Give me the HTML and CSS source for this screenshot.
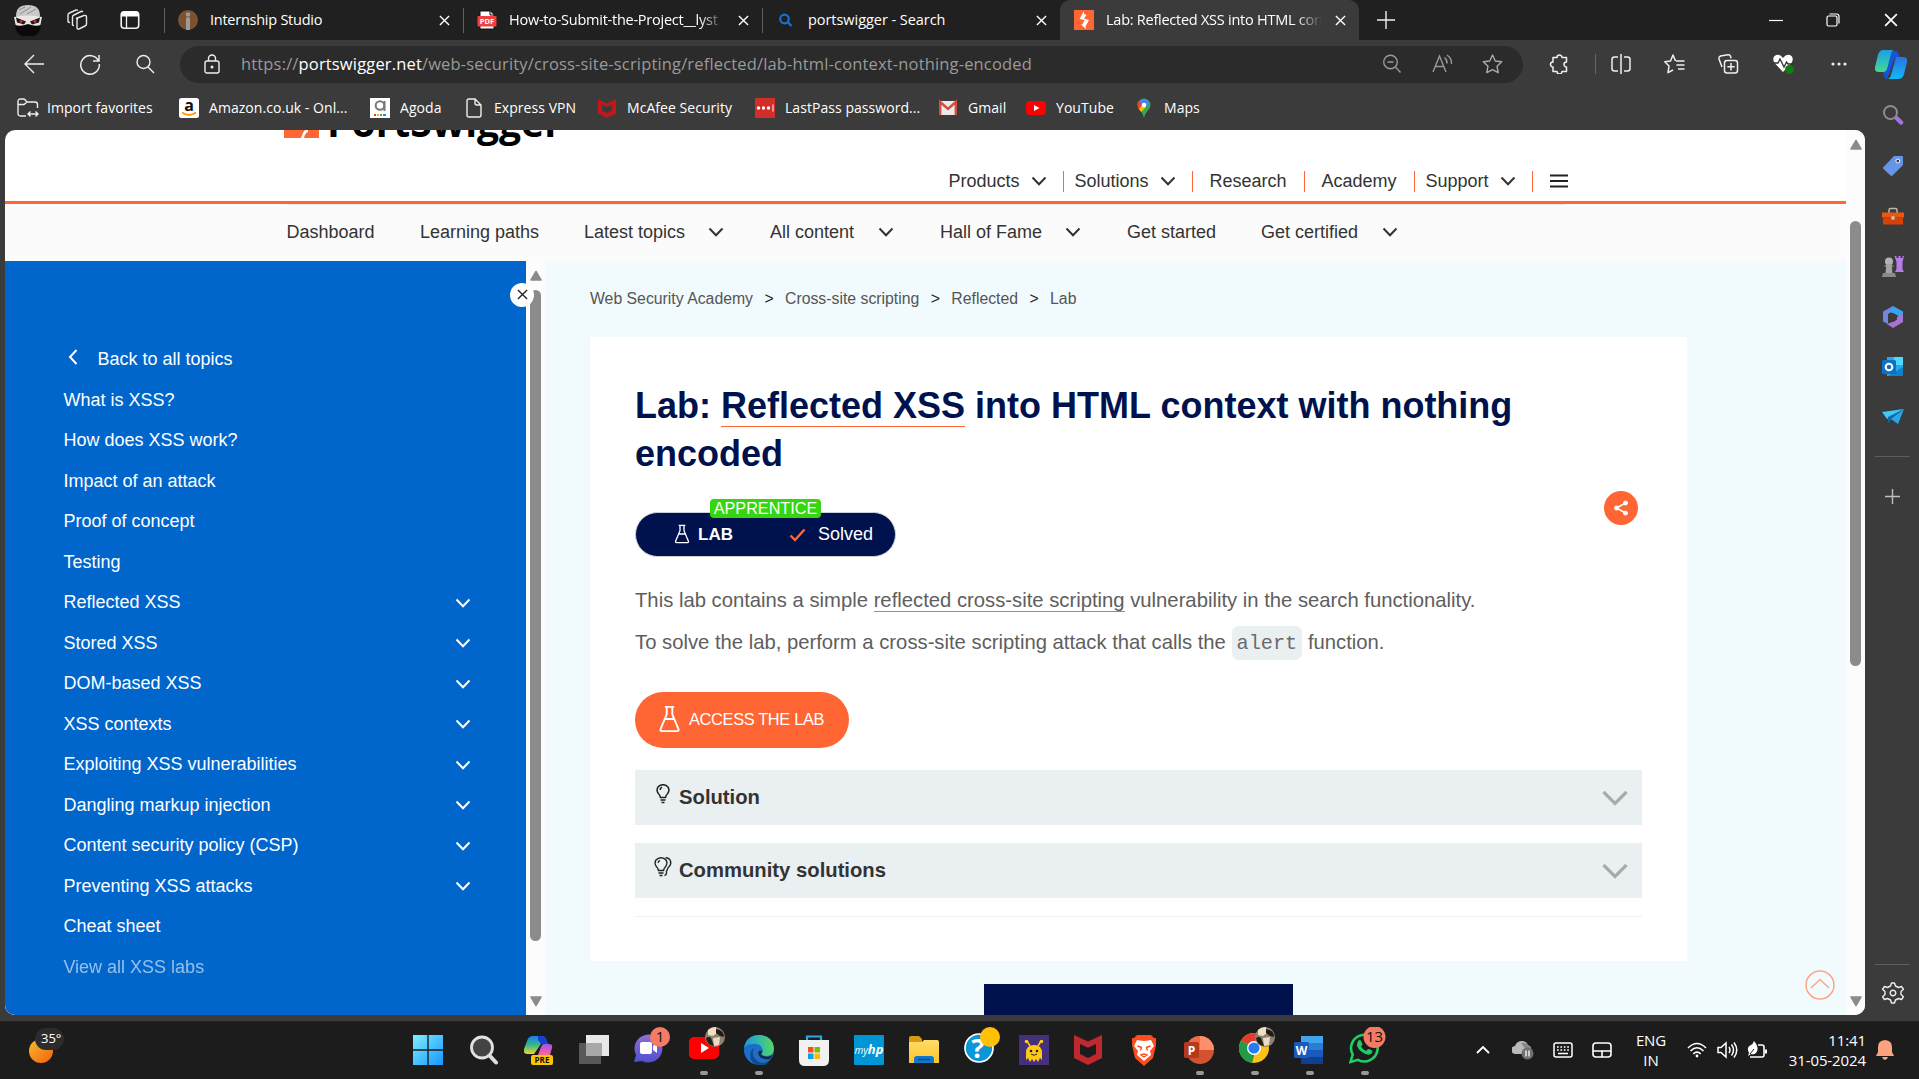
FILE: index.html
```html
<!DOCTYPE html>
<html lang="en">
<head>
<meta charset="utf-8">
<title>Lab: Reflected XSS into HTML context with nothing encoded</title>
<link rel="stylesheet" href="styles.css">
</head>
<body>
<svg class="defs" width="0" height="0">
  <defs>
    <symbol id="down" viewBox="0 0 16 10"><path d="M1.500 1.500 8 8.200 14.500 1.500" fill="none" stroke="currentColor" stroke-width="2"/></symbol>
    <symbol id="x" viewBox="0 0 12 12"><path d="M1 1l10 10M11 1 1 11" fill="none" stroke="currentColor" stroke-width="1.500"/></symbol>
    <symbol id="flask" viewBox="0 0 24 30"><path d="M7 2h10M9 2v8L2.500 25.500Q1.500 28 4 28h16q2.500 0 1.500-2.500L15 10V2M7 15h10" fill="none" stroke="currentColor" stroke-width="2"/></symbol>
    <symbol id="tri" viewBox="0 0 12 11"><path d="M6 1.500 11 10H1z" fill="#8b8b8b" stroke="#8b8b8b" stroke-linejoin="round" stroke-width="1.500"/></symbol>
    <linearGradient id="g1" x2="0" y2="1"><stop stop-color="#1aa0e8"/><stop offset="1" stop-color="#46d890"/></linearGradient>
    <linearGradient id="g2" x2="0" y2="1"><stop stop-color="#2a72e0"/><stop offset="1" stop-color="#12b8f8"/></linearGradient>
    <linearGradient id="g3" x2="1" y2="1"><stop stop-color="#7defff"/><stop offset="1" stop-color="#1596ff"/></linearGradient>
    <linearGradient id="g4" x2="1" y2="1"><stop stop-color="#f6bd2e"/><stop offset="1" stop-color="#f2600c"/></linearGradient>
    <linearGradient id="g5" x2="1" y2="0"><stop stop-color="#1599e6"/><stop offset="1" stop-color="#55d865"/></linearGradient>
    <linearGradient id="g6" x2="0" y2="1"><stop stop-color="#8d6fd1"/><stop offset="1" stop-color="#5050d0"/></linearGradient>
    <linearGradient id="g7" x2="0" y2="1"><stop stop-color="#ffdc67"/><stop offset="1" stop-color="#ffc32c"/></linearGradient>
    <linearGradient id="g8" x2="0" y2="1"><stop stop-color="#1b7fe8"/><stop offset=".5" stop-color="#35b88b"/><stop offset="1" stop-color="#f3d427"/></linearGradient>
    <linearGradient id="g9" x2="0" y2="1"><stop stop-color="#a34ef0"/><stop offset="1" stop-color="#ff6a8c"/></linearGradient>
  </defs>
</svg>

<div class="tabs">
  <div class="lead">
    <svg width="32" height="32" viewBox="0 0 32 32"><path d="M4 12Q4 1 16 1t12 11l-2 4H6z" fill="#c9c9c9"/><path d="M7 6l6-3M8 10l11-7M15 10l9-5" stroke="#8b8b8b"/><path d="M2 13q14-3 28 0l-2 10H4z" fill="#e9e6e5"/><path d="M4 13.500l10 4-2 3-7-2zM28 13.500l-10 4 2 3 7-2z" fill="#191919"/><circle cx="9" cy="17.500" r="1.500" fill="#e02020"/><circle cx="23" cy="17.500" r="1.500" fill="#e02020"/><path d="M3 21q6 2 13-1 7 3 13 1-1 12-13 12T3 21z" fill="#0a0a0a"/></svg>
    <svg width="22" height="22" viewBox="0 0 22 22" fill="none" stroke="#e8e8e8" stroke-width="1.400"><path d="M10 9.500 18 6.500q2.500-.5 2.500 1.500v7q0 1.500-1.500 2l-6 3q-2 .5-2-1.500v-7q0-1.500 1-2z"/><path d="M8 16.500q-2 0-1.500-2V8q0-1.500 1.500-2l7-3.500q1-.5 2 .5M4 13.500Q2 13.500 2 12V6q0-1.500 1.500-2L10 1q1-.3 2 .5"/></svg>
    <svg width="20" height="20" viewBox="0 0 20 20"><rect x="1.200" y="1.700" width="17.500" height="16.500" rx="3" fill="none" stroke="#f4f4f4" stroke-width="1.600"/><path d="M1.500 3q0-1.500 2-1.500h13q2 0 2 1.500v3.500h-17z" fill="#fff"/><path d="M6.500 6v12" stroke="#f4f4f4" stroke-width="1.300"/></svg>
  </div>
  <div class="tab"><svg width="20" height="20" viewBox="0 0 20 20"><circle cx="10" cy="10" r="10" fill="#7e5230"/><path d="M10 7.500V20" stroke="#9b9b9b" stroke-width="4"/><circle cx="10" cy="4.500" r="2.200" fill="#9b9b9b"/></svg><span>Internship Studio</span><i><svg width="11" height="11"><use href="#x"/></svg></i></div>
  <div class="tab"><svg width="20" height="20" viewBox="0 0 20 20"><path d="M3 1h10l4 4v14H3z" fill="#fff" stroke="#111"/><path d="M13 1v4h4" fill="#ddd" stroke="#111"/><rect x=".5" y="6" width="19" height="10.500" rx="1" fill="#f04040"/><text x="10" y="14" class="pdf">PDF</text></svg><span class="fade">How-to-Submit-the-Project__lyst</span><i><svg width="11" height="11"><use href="#x"/></svg></i></div>
  <div class="tab"><svg width="20" height="20" viewBox="0 0 20 20"><circle cx="8.500" cy="9" r="4.300" fill="none" stroke="#1473cf" stroke-width="2.200"/><path d="M11.500 12l4 4" stroke="#1473cf" stroke-width="2.400"/></svg><span class="wide">portswigger - Search</span><i><svg width="11" height="11"><use href="#x"/></svg></i></div>
  <div class="tab on"><svg width="20" height="20" viewBox="0 0 20 20"><path d="M0 0h20v20H0z" fill="#ff6633"/><path d="M10 1 5.500 9l5 1-2 4.500H7L12 19l-.5-2.500L15 10l-5-1.500L12.500 5 10 4z" fill="#fff"/></svg><span class="fade">Lab: Reflected XSS into HTML con</span><i><svg width="11" height="11"><use href="#x"/></svg></i></div>
  <div class="plus"><svg width="18" height="18"><path d="M9 0v18M0 9h18" stroke="#eee" stroke-width="1.400"/></svg></div>
  <div></div>
  <div class="win"><svg width="14" height="14"><path d="M0 7.500h14" stroke="#fff" stroke-width="1.200"/></svg></div>
  <div class="win"><svg width="14" height="14" fill="none" stroke="#fff" stroke-width="1.200"><rect x="1" y="3" width="10" height="10" rx="1.500"/><path d="M3.500 1h7q2.500 0 2.500 2.500v7"/></svg></div>
  <div class="win"><svg width="14" height="14"><use href="#x"/></svg></div>
</div>

<div class="bar">
  <div><svg width="20" height="20" fill="none" stroke="#eee" stroke-width="1.400"><path d="M20 10H1.500M10 1 1 10l9 9"/></svg></div>
  <div><svg width="22" height="22" fill="none" stroke="#eee" stroke-width="1.500"><path d="M19.500 8A9.300 9.300 0 1 0 20.300 11M20 2v6h-6"/></svg></div>
  <div><svg width="20" height="20" fill="none" stroke="#eee" stroke-width="1.400"><circle cx="8.500" cy="8" r="6.500"/><path d="M13 13l6 6"/></svg></div>
  <div class="pill">
    <svg width="16" height="20" fill="none" stroke="#eee" stroke-width="1.400"><rect x="1" y="7" width="14" height="12" rx="2"/><path d="M4.500 7V4.500a3.500 3.500 0 0 1 7 0V7"/><circle cx="8" cy="13" r=".8" fill="#eee"/></svg>
    <span class="url">https://<b>portswigger.net</b>/web-security/cross-site-scripting/reflected/lab-html-context-nothing-encoded</span>
    <svg width="20" height="20" fill="none" stroke="#999" stroke-width="1.400"><circle cx="8.500" cy="8" r="6.800"/><path d="M13.500 13l5 5.500M5.500 8h6"/></svg>
    <svg width="22" height="20" fill="none" stroke="#999" stroke-width="1.400"><path d="M1 18 7.500 2 14 18M3.500 12.500h8M12.500 3.500q3 2.500 2.500 6M15 1q5 3.500 4.500 9"/></svg>
    <svg width="21" height="20" fill="none" stroke="#aaa" stroke-width="1.400" stroke-linejoin="round"><path d="M10.500 1l2.800 6 6.400.8-4.700 4.400 1.200 6.500-5.700-3.100-5.700 3.100L6 12.200 1.300 7.800 7.700 7z"/></svg>
  </div>
  <div><svg width="20" height="20" fill="none" stroke="#f0f0f0" stroke-width="1.500" stroke-linejoin="round"><path d="M4 3.500h4a2.500 2.500 0 0 1 5 0h4.500V8a2.300 2.300 0 1 0 0 5v4.500H13a2.500 2.500 0 0 1-5 0H4V13a2.500 2.500 0 0 1 0-5z"/></svg></div>
  <div class="vline"></div>
  <div><svg width="20" height="20" fill="none" stroke="#f0f0f0" stroke-width="1.500"><path d="M7 3H3.500Q1 3 1 5.500v9Q1 17 3.500 17H7M13 3h3.500Q19 3 19 5.500v9q0 2.500-2.500 2.500H13M10 0v20"/></svg></div>
  <div><svg width="21" height="20" fill="none" stroke="#f0f0f0" stroke-width="1.500" stroke-linejoin="round"><path d="M11.500 7 9 1 6.500 7 .8 7.800 5 12 4 18.700l5-2.700M12 7h8.500M12.500 11h8M14 15h6.500"/></svg></div>
  <div><svg width="21" height="20" fill="none" stroke="#f0f0f0" stroke-width="1.500"><rect x="6.500" y="6.500" width="13" height="12.500" rx="2.500"/><path d="M13 9v7.500M9.300 12.800h7.400M4 13 1 5q-.5-2 1.500-3L10 .8q2-.3 2.500 1.500l.6 2"/></svg></div>
  <div><svg width="22" height="20"><path d="M11 4Q7-1.500 2.500 2 0 5 2.500 9L11 18l8.500-9q2.500-4 0-7Q15-1.500 11 4z" fill="#fff"/><path d="M1 9h5l2-4 4 8 2.500-5 1.500 2h5" fill="none" stroke="#333" stroke-width="1.300"/><circle cx="17.500" cy="15.500" r="4.500" fill="#107c10"/><path d="M15.500 15.500l1.500 1.500 2.500-3" stroke="#083" fill="none"/></svg></div>
  <div><svg width="18" height="6" fill="#eee"><circle cx="3" cy="3" r="1.600"/><circle cx="9" cy="3" r="1.600"/><circle cx="15" cy="3" r="1.600"/></svg></div>
  <div><svg width="32" height="30" viewBox="0 0 32 30"><path d="M6 2h14q3 0 4 4l1 3h-5L12 30q-3 0-4-8z" fill="#1554d8"/><path d="M8 1h11q-2 0-3 4l-4 15q-1 3-4 3H4q-5 0-4-5L3 6q1.500-5 5-5z" fill="url(#g1)"/><path d="M22 8h6q5 0 4 5l-3 12q-1 5-6 5H12q3 0 4-4l4-14q.5-4 2-4z" fill="url(#g2)"/></svg></div>
</div>

<div class="marks">
  <div><svg width="22" height="20" fill="none" stroke="#eee" stroke-width="1.400"><path d="M9 18H3.500Q1 18 1 15.500v-12Q1 1 3.500 1h3Q8 1 9 3l1 1h8q2.500 0 2.500 2.500V10M1 6.500h6l3-2.500M11 16h10M13.500 13.500 11 16l2.500 2.500M18.500 13.500 21 16l-2.500 2.500"/></svg><span>Import favorites</span></div>
  <div class="amz"><svg width="20" height="20"><rect width="20" height="20" rx="2.500" fill="#fff"/><text x="10" y="13" class="ama">a</text><path d="M3 14.500q7 5 14 0" fill="none" stroke="#f90" stroke-width="1.800"/></svg><span>Amazon.co.uk - Onl...</span></div>
  <div><svg width="20" height="20"><path d="M0 0h20v20H0z" fill="#fff"/><circle cx="10" cy="7.500" r="4.300" fill="none" stroke="#777" stroke-width="2"/><path d="M14.500 3v10" stroke="#777" stroke-width="2"/><path d="M4 17h2" stroke="#e33" stroke-width="2"/><path d="M7 17h2" stroke="#fa0" stroke-width="2"/><path d="M10 17h2" stroke="#3a4" stroke-width="2"/><path d="M13 17h3" stroke="#38d" stroke-width="2"/></svg><span>Agoda</span></div>
  <div><svg width="20" height="20" fill="none" stroke="#eee" stroke-width="1.400"><path d="M5 1h6l6 6v10q0 2-2 2H5q-2 0-2-2V3q0-2 2-2zM11 1v4q0 2 2 2h4"/></svg><span>Express VPN</span></div>
  <div><svg width="20" height="20"><path d="M1 1l9 4.500L19 1v14.500L10 20l-9-4.500zM5 6.500v6l5 2.500 5-2.500v-6L10 9z" fill="#c01818" fill-rule="evenodd"/></svg><span>McAfee Security</span></div>
  <div><svg width="20" height="20"><path d="M0 0h20v20H0z" fill="#d32d27"/><g fill="#fff"><circle cx="3.500" cy="10" r="1.700"/><circle cx="8.500" cy="10" r="1.700"/><circle cx="13.500" cy="10" r="1.700"/><path d="M17.500 6.500h1v7h-1z"/></g></svg><span>LastPass password...</span></div>
  <div><svg width="20" height="20"><rect x="1" y="3" width="18" height="14" rx="1.500" fill="#e9e9e9"/><path d="M2.200 17V4L10 11l7.800-7v13" fill="none" stroke="#d54b3d" stroke-width="2.400"/></svg><span>Gmail</span></div>
  <div><svg width="20" height="20"><rect y="3" width="20" height="14" rx="4" fill="#f00"/><path d="M8 7l5.500 3L8 13z" fill="#fff"/></svg><span>YouTube</span></div>
  <div><svg width="20" height="20"><path d="M10 20q-.8-4-3.500-7.500T3.500 7A6.500 6.500 0 0 1 10 .5 6.500 6.500 0 0 1 16.500 7q0 3-3 6T10 20z" fill="#34a853"/><path d="M3.800 6A6.500 6.500 0 0 1 16 5L8 11z" fill="#4285f4"/><path d="M4.500 3 10 7l-4.500 5q-2-2-2-5 0-2.500 1-4z" fill="#ea4335"/><path d="M5 11l4-5 3 3-5 5z" fill="#fbbc04"/><circle cx="10" cy="7" r="2.300" fill="#fff"/></svg><span>Maps</span></div>
</div>

<div class="page">
  <div class="content">
    <header>
      <div class="logo"><svg width="35" height="40"><path d="M0 0h35v40H0z" fill="#ff6633"/><path d="M17 40q2-8 7-10v4q-3 1-4 6z" fill="#fff"/></svg><span>PortSwigger</span></div>
      <nav class="top">
        <a class="c1">Products<svg><use href="#down"/></svg></a>
        <a class="c2">Solutions<svg><use href="#down"/></svg></a>
        <a class="c3">Research</a>
        <a class="c4">Academy</a>
        <a class="c5">Support<svg><use href="#down"/></svg></a>
        <a class="c6"><svg class="burger" viewBox="0 0 18 14"><path d="M0 1.500h18M0 7h18M0 12.500h18" stroke="#222" stroke-width="2.200"/></svg></a>
      </nav>
    </header>
    <nav class="sub">
      <a>Dashboard</a><a>Learning paths</a><a>Latest topics</a><svg><use href="#down"/></svg><a>All content</a><svg><use href="#down"/></svg><a>Hall of Fame</a><svg><use href="#down"/></svg><a>Get started</a><a>Get certified</a><svg><use href="#down"/></svg>
    </nav>
    <div class="main">
      <aside>
        <a class="back"><svg viewBox="0 0 10 16"><path d="M8.500 1 2 8l6.500 7" fill="none" stroke="#fff" stroke-width="2"/></svg>Back to all topics</a>
        <a>What is XSS?</a>
        <a>How does XSS work?</a>
        <a>Impact of an attack</a>
        <a>Proof of concept</a>
        <a>Testing</a>
        <a>Reflected XSS<svg><use href="#down"/></svg></a>
        <a>Stored XSS<svg><use href="#down"/></svg></a>
        <a>DOM-based XSS<svg><use href="#down"/></svg></a>
        <a>XSS contexts<svg><use href="#down"/></svg></a>
        <a>Exploiting XSS vulnerabilities<svg><use href="#down"/></svg></a>
        <a>Dangling markup injection<svg><use href="#down"/></svg></a>
        <a>Content security policy (CSP)<svg><use href="#down"/></svg></a>
        <a>Preventing XSS attacks<svg><use href="#down"/></svg></a>
        <a>Cheat sheet</a>
        <a class="dim">View all XSS labs</a>
        <div class="shut"><svg width="11" height="11"><use href="#x"/></svg></div>
      </aside>
      <div class="scroll inner"><svg><use href="#tri"/></svg><div class="thumb"></div><svg class="flip"><use href="#tri"/></svg></div>
      <div class="area">
        <div class="crumbs"><span>Web Security Academy</span><em>&gt;</em><span>Cross-site scripting</span><em>&gt;</em><span>Reflected</span><em>&gt;</em><span>Lab</span></div>
        <div class="card">
          <h1>Lab: <u>Reflected XSS</u> into HTML context with nothing encoded</h1>
          <div class="meta">
            <div class="status">
              <svg width="18" height="20"><use href="#flask"/></svg><b>LAB</b>
              <svg class="tick" width="17" height="14"><path d="M1.500 7.500 6 12 15.500 1.500" fill="none" stroke="#ff6633" stroke-width="2.400"/></svg><span>Solved</span>
              <div class="level">APPRENTICE</div>
            </div>
            <div class="share"><svg width="16" height="16" fill="#fff" stroke="#fff"><path d="M3.500 8 12.500 3M3.500 8l9 5" stroke-width="1.500"/><circle cx="3.500" cy="8" r="2"/><circle cx="12.500" cy="3" r="2"/><circle cx="12.500" cy="13" r="2"/></svg></div>
          </div>
          <p>This lab contains a simple <u>reflected cross-site scripting</u> vulnerability in the search functionality.</p>
          <p>To solve the lab, perform a cross-site scripting attack that calls the <code>alert</code> function.</p>
          <div class="access"><svg width="23" height="28"><use href="#flask"/></svg>ACCESS THE LAB</div>
          <div class="fold"><svg width="22" height="20" viewBox="0 0 22 20"><path d="M8.500 13.500Q8 11 6.300 9.500 4 6 6 3q2-2.300 5-2.300T16 3q2 3-.3 6.500-1.700 1.500-2.200 4zM8.500 16h5M9.500 18.500h3M8 6q.3-2 2-2.700" fill="none" stroke="#222" stroke-width="1.500"/></svg><b>Solution</b><svg class="big" viewBox="0 0 26 16"><path d="M1.500 2 13 13.500 24.500 2" fill="none" stroke="#aaa" stroke-width="3.200"/></svg></div>
          <div class="fold"><svg width="22" height="20" viewBox="0 0 22 20"><path d="M6.500 13.500Q6 11 4.300 9.500 2 6 4 3q2-2.300 5-2.300T14 3q2 3-.3 6.500-1.700 1.500-2.200 4zM6.500 16h5M7.500 18.500h3M6 6q.3-2 2-2.700M13.500.8q4 .2 5 3.200 1 3-1.300 5.500-1.700 1.500-2.200 4M14.500 13.500v2.500q0 2-2 2.500" fill="none" stroke="#222" stroke-width="1.400"/></svg><b>Community solutions</b><svg class="big" viewBox="0 0 26 16"><path d="M1.500 2 13 13.500 24.500 2" fill="none" stroke="#aaa" stroke-width="3.200"/></svg></div>
          <hr>
        </div>
        <div class="block"></div>
        <svg class="totop" viewBox="0 0 30 30" fill="none" stroke="#fca78c" stroke-width="1.500"><circle cx="15" cy="15" r="14"/><path d="M6 18l9-8.500 9 8.500"/></svg>
      </div>
    </div>
  </div>
  <div class="scroll outer"><svg><use href="#tri"/></svg><div class="thumb"></div><svg class="flip"><use href="#tri"/></svg></div>
</div>

<div class="rail">
  <div><svg width="22" height="22"><circle cx="8.500" cy="8.500" r="6.500" fill="none" stroke="#8d8d8d" stroke-width="2"/><path d="M15 14.500l4 4" stroke="#a274dc" stroke-width="4.500" stroke-linecap="round"/></svg></div>
  <div><svg width="22" height="22"><path d="M12 1h8q1 0 1 1v8L10.500 20.500q-1 .8-2 0L1.500 14q-1-1 0-2z" fill="#6594e8"/><circle cx="15.800" cy="6" r="1.900" fill="#333" stroke="#fff"/></svg></div>
  <div><svg width="22" height="19"><path d="M7 6V3q0-1.500 1.500-1.500h5Q15 1.500 15 3v3" fill="none" stroke="#b8b8b8" stroke-width="1.500"/><path d="M0 5.500h22v5H0z" fill="#e8580e"/><path d="M1 10.500h20v7H1z" fill="#d64105"/><circle cx="11" cy="11" r="2" fill="#bbb"/></svg></div>
  <div><svg width="22" height="24"><circle cx="7" cy="6.500" r="4" fill="#b2b2b2"/><path d="M2.500 10h9v2h-9z" fill="#777"/><path d="M4.500 9h5l1 9h-7z" fill="#a4a4a4"/><path d="M1 18h12l1 4H0z" fill="#8a8a8a"/><path d="M12.500 1h2v2h2V1h2v2h2V1h1.500l-1.500 6v7l1.500 3h-9l1.500-3V7z" fill="#b57de8"/></svg></div>
  <div><svg width="22" height="22"><path d="M11 0 1 5.500v10L6 18V8l5-3z" fill="#7286df"/><path d="M11 0l10 5.500v7L15 9 8 6z" fill="#35a5ec"/><path d="M21 8v8L11 22l-6-4 8-3 3-5z" fill="#a874d4"/><path d="M11 7l4 2.500v4L11 16l-3-2V9z" fill="#3b3b3b"/></svg></div>
  <div><svg width="22" height="22"><path d="M5 1h14q2 0 2 2v16q0 1-1 1H5z" fill="#28a8ea"/><path d="M12 1h9v8h-9z" fill="#50d9ff"/><path d="M21 11v9H6z" fill="#127fc8"/><rect x="0" y="4" width="14" height="14" rx="1.500" fill="#0f70c8"/><circle cx="7" cy="11" r="3.300" fill="none" stroke="#fff" stroke-width="2"/></svg></div>
  <div><svg width="22" height="18"><path d="M0 5 22 2 5 12z" fill="#41c8f4"/><path d="M22 2 6 10v6l3-3z" fill="#0c67a8"/><path d="M22 2 9 12l7 5z" fill="#2aa6e8"/></svg></div>
  <hr>
  <div class="add"><svg width="15" height="15"><path d="M7.500 0v15M0 7.500h15" stroke="#c0c0c0" stroke-width="1.400"/></svg></div>
  <hr class="low">
  <div class="gear"><svg width="22" height="22" viewBox="-11 -11 22 22" fill="none" stroke="#eee" stroke-width="1.400" stroke-linejoin="round"><path d="M-1.500-10h3l1 3 3 1.500 3-1 2 2.800L8-1.500v3l2.500 2.200-2 2.800-3-1-3 1.500-1 3h-3l-1-3-3-1.500-3 1-2-2.800L-8 1.500v-3l-2.500-2.200 2-2.800 3 1 3-1.500z"/><circle r="2.800"/></svg></div>
</div>

<div class="task">
  <div class="weather"><svg width="40" height="42"><circle cx="14" cy="26" r="12" fill="url(#g4)"/><rect x="8" y="3" width="29" height="22" rx="11" fill="#2c2c2c"/></svg><span>35°</span></div>
  <div class="apps">
    <div><svg width="30" height="30" fill="url(#g3)"><path d="M0 0h14.300v14.300H0zM15.700 0H30v14.300H15.700zM0 15.700h14.300V30H0zM15.700 15.700H30V30H15.700z"/></svg></div>
    <div><svg width="30" height="30"><circle cx="13" cy="12.500" r="10.500" fill="#444" stroke="#e2e2e2" stroke-width="2.800"/><path d="M20.500 20.500l6.500 7" stroke="#dcdce4" stroke-width="4" stroke-linecap="round"/></svg></div>
    <div><svg width="30" height="30"><path d="M9 1h9q3 0 4 3l2 5h-7L10 19H3q-4 0-3-5L3 6q1.500-5 6-5z" fill="url(#g8)"/><path d="M14 1h4q3 0 4 3l2 5h-7l-3-4z" fill="#173fd6"/><path d="M20 9h5q4 0 3 4l-2 7H14l3-8q1-3 3-3z" fill="url(#g9)"/><rect x="7" y="20" width="22" height="10" rx="2" fill="#ffc400"/><text x="18" y="28.300" class="pre">PRE</text></svg></div>
    <div><svg width="30" height="30"><path d="M0 8h22v21H0z" fill="#585858"/><path d="M7 0h23v21H7z" fill="#e8e8e8"/><path d="M7 8h16v13H7z" fill="#a8a8a8"/></svg></div>
    <div><svg width="36" height="40" viewBox="0 -6 36 40"><path d="M0 29 2 22A14 14 0 1 1 8 28z" fill="url(#g6)"/><rect x="6" y="9" width="12" height="12" rx="2" fill="#fff"/><path d="M19 13l4-3v10l-4-3z" fill="#fff"/><circle cx="26" cy="4" r="10" fill="#f47c64"/><text x="26" y="9" class="cnt">1</text></svg></div>
    <div class="run"><svg width="36" height="40" viewBox="0 -6 36 40"><rect y="4" width="30" height="22" rx="5" fill="#f00"/><path d="M12 10l8 5-8 5z" fill="#fff"/><circle cx="26" cy="4" r="10" fill="#8d8270"/><path d="M19-3q3-3 8-3l1 6-4 3-5-1z" fill="#f0dfc0"/><path d="M27-4q8 1 8 8l-4-1-4-3z" fill="#231b15"/><path d="M24 5l7-1-1 8-5 1z" fill="#eed9c8"/><path d="M17 5q3-2 5 0l3 8q-7-1-8-8z" fill="#1e2019"/></svg></div>
    <div class="run"><svg width="30" height="30"><circle cx="15" cy="15" r="15" fill="#1b6fc8"/><path d="M0 13Q2 0 16 0q13 1 14 13 0 7-7 8-5 0-6-2 3-3 1-6-3-5-9-4Q3 9 0 13z" fill="url(#g5)"/><path d="M10 13q-4 9 5 14 6 3 12-3-5 9-15 5.500Q4 25 7 16q1-2 3-3z" fill="#134a8c"/><path d="M17 19q4 5 12 1l-3 4q-6 1-10-2-3-4-1-6 2-1 3 0 1 1-1 3z" fill="#1c1c1c" opacity=".8"/></svg></div>
    <div><svg width="30" height="31"><path d="M8 6V1.500h14V6" fill="none" stroke="#2ea7e8" stroke-width="2.200"/><path d="M0 5h30v20q0 6-6 6H6q-6 0-6-6z" fill="#f1f1f1"/><path d="M9 12h5.500v5.500H9z" fill="#f25022"/><path d="M15.500 12H21v5.500h-5.500z" fill="#7fba00"/><path d="M9 18.500h5.500V24H9z" fill="#00a4ef"/><path d="M15.500 18.500H21V24h-5.500z" fill="#ffb900"/></svg></div>
    <div><svg width="30" height="30"><rect width="30" height="30" rx="1" fill="#0096d6"/><text x="15" y="19" class="hp">my<tspan class="hp2">hp</tspan></text></svg></div>
    <div><svg width="30" height="28"><path d="M0 2q0-2 2-2h8l3 3v6H0z" fill="#d99a10"/><path d="M0 6h13l2-2h13q2 0 2 2v21H0z" fill="url(#g7)"/><path d="M5 27v-4q0-3 3-3h14q3 0 3 3v4z" fill="#1177cc"/><path d="M9 23.500h12" stroke="#0a4f93" stroke-width="1.500"/></svg></div>
    <div><svg width="36" height="40" viewBox="0 -6 36 40"><circle cx="15" cy="15" r="14" fill="#0d96d6" stroke="#fff" stroke-width="1.700"/><text x="14" y="25" class="q">?</text><circle cx="26" cy="4" r="10" fill="#ffc107"/></svg></div>
    <div><svg width="30" height="30"><path d="M0 0h30v30H0z" fill="#45307c"/><path d="M7 18q0-8 8-8t8 8v7l-2-2-2 4-2-3-2 3-2-3-2 3-2-4-2 2z" fill="#ffc815"/><path d="M11 11 8 6M19 11l3-5" stroke="#ffc815" stroke-width="1.500"/><circle cx="7.500" cy="6.500" r="1.800" fill="#ffc815"/><circle cx="22.500" cy="6.500" r="1.800" fill="#ffc815"/><circle cx="12" cy="16" r="1.300" fill="#222"/><circle cx="18" cy="16" r="1.300" fill="#222"/><path d="M12 19q3 2.500 6 0" stroke="#222" fill="none"/></svg></div>
    <div><svg width="28" height="30"><path d="M0 0l14 6.500L28 0v23L14 30 0 23zM6 9v10l8 4 8-4V9l-8 3.700z" fill="#c1282d" fill-rule="evenodd"/></svg></div>
    <div><svg class="lion" width="26" height="31"><path d="M6 0h14l3 3h2v7l-3 13-9 8-9-8L1 10V3h2z" fill="#fb4c1e"/><path d="M13 6 6 5 3 11l4 5-1 4 7 6 7-6-1-4 4-5-3-6z" fill="#fff"/><path d="M6.500 11l4 1.500-1 3M19.500 11l-4 1.500 1 3M10 20l3-1 3 1-3 2z" fill="none" stroke="#fb4c1e" stroke-width="1.400"/></svg></div>
    <div class="run"><svg width="30" height="30"><circle cx="16" cy="15" r="14" fill="#d35230"/><path d="M16 1a14 14 0 0 1 14 14H16z" fill="#ff8f6b"/><path d="M16 1v14H2A14 14 0 0 1 16 1z" fill="#ed6c47"/><rect y="7" width="15" height="16" rx="1.500" fill="#b7391c"/><text x="7.500" y="19.500" class="ltr">P</text></svg></div>
    <div class="run"><svg width="36" height="40" viewBox="0 -6 36 40"><circle cx="15" cy="15" r="15" fill="#fbc116"/><path d="M15 15 2 7.500A15 15 0 0 1 28 7.500z" fill="#e33b2e"/><path d="M2 7.500 15 15v8l-2 7A15 15 0 0 1 2 7.500z" fill="#229a48"/><circle cx="15" cy="15" r="7" fill="#fff"/><circle cx="15" cy="15" r="5.600" fill="#2a7bf0"/><circle cx="26" cy="4" r="10" fill="#8d8270"/><path d="M19-3q3-3 8-3l1 6-4 3-5-1z" fill="#f0dfc0"/><path d="M27-4q8 1 8 8l-4-1-4-3z" fill="#231b15"/><path d="M24 5l7-1-1 8-5 1z" fill="#eed9c8"/><path d="M17 5q3-2 5 0l3 8q-7-1-8-8z" fill="#1e2019"/></svg></div>
    <div class="run"><svg width="30" height="28"><path d="M7 0h22v7H7z" fill="#41a5ee"/><path d="M7 7h22v7H7z" fill="#2b7cd3"/><path d="M7 14h22v7H7z" fill="#185abd"/><path d="M7 21h22v7H7z" fill="#103f91"/><rect y="6" width="15" height="16" rx="1.500" fill="#185abd"/><text x="7.500" y="18.500" class="ltr">W</text></svg></div>
    <div class="run"><svg width="38" height="40" viewBox="0 -6 38 40"><path d="M1.500 29 3.700 21.500A13.300 13.300 0 1 1 9 26.800z" fill="none" stroke="#22cc63" stroke-width="2.600"/><path d="M9 8q2-2 3 0l1.500 3q0 1-1.500 2.500 2 3.500 5 4.500 2-2.500 3-2l3 1.500q1 .5-.5 3-2 2-6 .5-6-2.500-8.500-8Q8 10 9 8z" fill="#22cc63"/><circle cx="25.500" cy="4" r="11" fill="#f47c64"/><text x="25.500" y="9" class="cnt">13</text></svg></div>
  </div>
  <div class="tray">
    <div><svg width="14" height="9" fill="none" stroke="#fff" stroke-width="1.900"><path d="M1 8l6-6 6 6"/></svg></div>
    <div><svg width="22" height="20"><path d="M4 14a4 4 0 0 1-1-8 7 7 0 0 1 13-1 5 5 0 0 1 1 9z" fill="#b9b9b9"/><path d="M9 3a7 7 0 0 1 7 2 5 5 0 0 1 1 9z" fill="#888"/><circle cx="15.500" cy="13.500" r="6" fill="#707070"/><path d="M14 10.500v6M17 10.500v6" stroke="#fff" stroke-width="1.300"/></svg></div>
    <div><svg width="20" height="16" fill="none" stroke="#fff" stroke-width="1.500"><rect x="1" y="1" width="18" height="14" rx="2"/><path d="M4 5h12M4 8h12" stroke-dasharray="1.700 1.700"/><path d="M5 11.500h10"/></svg></div>
    <div><svg width="20" height="16" fill="none" stroke="#fff" stroke-width="1.600"><rect x="1" y="1" width="18" height="14" rx="3"/><path d="M1 9h18M10 9v6"/></svg></div>
    <div class="lang">ENG<br>IN</div>
    <div><svg width="20" height="16" fill="none" stroke="#fff" stroke-width="1.600"><path d="M1 6q9-9 18 0M3.500 9q6.500-6.500 13 0M6.300 11.800q3.700-3.500 7.400 0"/><circle cx="10" cy="14" r="1.400" fill="#fff" stroke="none"/></svg></div>
    <div><svg width="21" height="18" fill="none" stroke="#fff" stroke-width="1.500"><path d="M1 6.500h3L9 2v14l-5-4.500H1zM12 6q2 3 0 6M14.500 3.500q4 5.500 0 11M17 1.500q5.500 7.500 0 15"/></svg></div>
    <div><svg width="21" height="18"><path d="M11 4h4q2 0 2 2v8q0 2-2 2H3" fill="none" stroke="#fff" stroke-width="1.600"/><path d="M18 8.500h2v4h-2z" fill="#fff"/><path d="M7 0q6 7 2 12-2 2-5 1l-3 2 1-3q-3-6 2-8 2-1 3-4z" fill="#fff"/><path d="M3 13l4-5" stroke="#1c1c1c"/></svg></div>
    <div class="clock">11:41<br>31-05-2024</div>
    <div><svg width="18" height="20" fill="#fba37f"><path d="M9 0q7 .5 7 7v5l2 4H0l2-4V7q0-6.500 7-7zM6 17h6q-1 3-3 3t-3-3z"/></svg></div>
  </div>
</div>
</body>
</html>
```
FILE: styles.css
```css
* { box-sizing: border-box; }
body {
  margin: 0;
  width: 1919px;
  height: 1079px;
  overflow: hidden;
  display: grid;
  grid-template-columns: 1865px 54px;
  grid-template-rows: 40px 48px 42px 885px 6px 58px;
  background: #3b3b3b;
  color: #fff;
  font: 15px/20px "Open Sans", "Noto Sans", sans-serif;
}
svg { display: block; flex: none; }
.defs { position: absolute; }

/* tab strip */
.tabs {
  grid-column: 1 / 3;
  display: grid;
  grid-template-columns: 164px 299px 299px 298px 299px 54px 1fr 57px 58px 57px;
  background: #202020;
}
.tabs > div { display: flex; align-items: center; }
.lead { padding-left: 12px; }
.lead svg:nth-child(2) { margin-left: 22px; }
.lead svg:nth-child(3) { margin-left: 32px; }
.tab {
  padding-left: 14px;
  background: linear-gradient(#606060, #606060) 0 8px / 1px 25px no-repeat;
}
.tab span {
  flex: 1;
  margin-left: 12px;
  overflow: hidden;
  white-space: nowrap;
  font-size: 14.5px;
  letter-spacing: -.25px;
}
.tab .wide { letter-spacing: -.05px; }
.fade { -webkit-mask-image: linear-gradient(90deg, #000 88%, transparent); mask-image: linear-gradient(90deg, #000 88%, transparent); }
.tab i { width: 37px; display: flex; justify-content: center; }
.tab.on { background: #3b3b3b; border-radius: 10px 10px 0 0; }
.plus, .win { justify-content: center; }

/* toolbar */
.bar {
  grid-column: 1 / 3;
  display: grid;
  grid-template-columns: 68px 44px 66px 1345px 72px 1px 49px 59px 48px 62px 49px 56px;
  align-items: center;
}
.bar > div { display: flex; justify-content: center; }
.bar > .pill {
  height: 37px;
  margin-left: 2px;
  border-radius: 19px;
  background: #2b2b2b;
  align-items: center;
  justify-content: flex-start;
  padding-left: 24px;
}
.url {
  width: 1141px;
  margin-left: 21px;
  color: #9a9a9a;
  font-size: 16.5px;
  letter-spacing: .16px;
  white-space: nowrap;
}
.url b { color: #fff; font-weight: 400; }
.pill svg:nth-of-type(3) { margin-left: 30px; }
.pill svg:nth-of-type(4) { margin-left: 28px; }
.bar > .vline { width: 1px; height: 20px; background: #666; }

/* favourites */
.marks {
  display: grid;
  grid-template-columns: 162px 191px 94px 133px 158px 183px 88px 108px 1fr;
  padding: 0 0 2px 17px;
  align-items: center;
}
.marks > div { display: flex; align-items: center; height: 20px; }
.marks span { margin-left: 10px; white-space: nowrap; font-size: 14px; letter-spacing: .05px; }
.marks > div:first-child span { margin-left: 8px; }
.amz { box-shadow: -13px 0 0 -12px #666; }
.ama { font: bold 16px "Open Sans", sans-serif; text-anchor: middle; fill: #111; }
.pdf { font: bold 7.5px "Open Sans", sans-serif; text-anchor: middle; fill: #fff; }

/* page viewport */
.page {
  grid-column: 1;
  margin-left: 5px;
  display: flex;
  overflow: hidden;
  border-radius: 10px;
  background: #fff;
  color: #333;
  font: 18px/21px "Liberation Sans", Arial, sans-serif;
}
.content { width: 1841px; display: flex; flex-direction: column; }
.content nav svg { width: 16px; height: 10px; margin-top: -2px; }
header { height: 74px; border-bottom: 3px solid #ff6633; }
.logo { display: flex; height: 40px; margin: -32px 0 0 279px; }
.logo span {
  padding: 4px 0 0 8px;
  font: 700 39px/40px "Open Sans", sans-serif;
  color: #000;
}
.top { display: flex; margin: 33px 0 0 943.5px; height: 21px; }
.top a { display: flex; align-items: center; justify-content: space-between; border-right: 1px solid #ff6633; padding-right: 16px; }
.c1 { width: 115px; }
.c2 { width: 129px; padding-left: 11px; }
.c3 { width: 112px; padding-left: 17px; }
.c4 { width: 110px; padding-left: 17px; }
.c5 { width: 118px; padding-left: 11px; }
.top .c6 { padding: 0 0 0 17px; border: 0; }
.top .burger { width: 18px; height: 14px; }
.sub {
  height: 57px;
  padding-left: 281.5px;
  display: grid;
  grid-template-columns: 133.5px 164px 124px 62px 108px 62px 125px 62px 134px 121px 20px;
  align-items: center;
  background: #fbfbfb linear-gradient(#e9e9e9, #e9e9e9) 282px 0 / 1278px 1px no-repeat;
}
.main { display: flex; height: 754px; background: #f1fafc; }

/* topic list */
aside {
  position: relative;
  width: 521px;
  padding: 78.6px 0 0 58.4px;
  background: #0066cc;
  color: #fff;
}
aside a { display: flex; height: 40.5px; align-items: center; }
aside a svg { width: 16px; height: 10px; margin-left: auto; margin-right: 55px; }
aside .back svg { width: 10px; height: 16px; margin: -6px 19px 0 5px; }
.dim { opacity: .58; }
.shut {
  position: absolute;
  right: -8px;
  top: 21.5px;
  width: 24px;
  height: 24px;
  border-radius: 50%;
  background: #fff;
  color: #222;
  display: grid;
  place-items: center;
  z-index: 1;
}

/* scrollbars */
.scroll { width: 19px; background: #fcfcfc; display: flex; flex-direction: column; align-items: center; padding: 9px 0 8px; }
.scroll svg { width: 12px; height: 11px; }
.scroll .flip { transform: rotate(180deg); margin-top: auto; }
.thumb { width: 11px; border-radius: 6px; background: #8b8b8b; }
.inner .thumb { height: 651px; margin-top: 9px; }
.outer .thumb { height: 445px; margin-top: 71px; }

/* lab article */
.area { position: relative; flex: 1; padding: 26px 0 0 45px; }
.crumbs { display: flex; font-size: 15.8px; height: 22px; align-items: center; color: #555; }
.crumbs em { font-style: normal; color: #222; width: 32px; text-align: center; }
.card { width: 1097px; height: 624px; margin-top: 28px; background: #fff; padding: 45px 45px 0; }
h1 { margin: 0; font-size: 36px; line-height: 48px; color: #00124d; }
u { text-decoration: none; border-bottom: 1px solid #ff6633; }
.meta { height: 84px; display: flex; justify-content: space-between; }
.status {
  position: relative;
  margin-top: 34px;
  width: 261px;
  height: 45px;
  border-radius: 23px;
  border: 1px solid #ccd0d8;
  background: #00124d;
  color: #fff;
  display: flex;
  align-items: center;
  padding: 0 0 1px 37px;
}
.status b { margin-left: 7px; font-size: 17px; width: 34px; }
.status .tick { margin: 2px 12px 0 57px; }
.level {
  position: absolute;
  left: 74px;
  top: -14px;
  width: 111px;
  height: 19px;
  border-radius: 4px;
  background: #33d60f;
  font-size: 16.2px;
  line-height: 19px;
  text-align: center;
}
.share {
  width: 34px;
  height: 34px;
  margin: 13px 4px 0 0;
  border-radius: 50%;
  background: #ff6633;
  display: grid;
  place-items: center;
}
.card p { margin: 0; font-size: 20.25px; line-height: 42px; height: 42px; color: #5e5e5e; white-space: nowrap; }
.meta + p { margin-top: 17px; }
code {
  font: 20.25px/24px "Liberation Mono", monospace;
  background: #eaeff2;
  border-radius: 7px;
  padding: 6px 5px 5px;
  color: #6a6a6a;
}
.access {
  width: 214px;
  height: 56px;
  margin: 29px 0 22px;
  border-radius: 28px;
  background: #ff6633;
  color: #fff;
  font-size: 16.4px;
  letter-spacing: -.35px;
  display: flex;
  align-items: center;
  gap: 8px;
  padding: 0 0 2px 23px;
}
.fold {
  height: 54.5px;
  margin-bottom: 18.5px;
  background: #eaeff2;
  display: flex;
  align-items: center;
  padding: 0 14px 0 17px;
  font-size: 20.25px;
}
.fold b { margin-left: 5px; }
.fold > svg:first-child { margin-top: -6px; }
.big { width: 26px; height: 16px; margin: 1px 0 0 auto; }
.card hr { height: 1px; border: 0; margin: 0; background: #eeeff1; }
.block { width: 309px; height: 31px; margin: 23px 0 0 394px; background: #00124d; }
.totop { position: absolute; right: 11px; top: 709px; width: 30px; height: 30px; }

/* edge side rail */
.rail { grid-column: 2; grid-row: 3 / 6; display: flex; flex-direction: column; align-items: center; padding: 2px 0 0 1px; }
.rail > div { height: 50.2px; display: grid; place-items: center; }
.rail > div:nth-child(n+2):nth-child(-n+6) { padding-top: 2px; }
.rail hr { width: 35px; height: 1px; margin: 15px 0 0; border: 0; background: #5d5d5d; flex: none; }
.rail > .add { height: 78px; }
.rail .low { margin-top: 429px; }
.rail > .gear { height: 55px; }

/* taskbar */
.task { grid-column: 1 / 3; grid-row: 6; background: #1c1c1c; display: flex; border-top: 1px solid #222; }
.weather { position: relative; width: 400px; padding: 3px 0 0 27px; }
.weather span { position: absolute; left: 41px; top: 6px; font-size: 13px; }
.apps { display: flex; padding-bottom: 1px; }
.apps > div { position: relative; width: 55.06px; padding-left: 13.5px; display: flex; align-items: center; }
.apps > div:first-child { padding-left: 12.5px; }
.apps svg[height="40"] { margin-top: -6px; }
.apps .lion { margin-left: 2px; }
.run::after { content: ""; position: absolute; left: 25px; bottom: 3px; width: 8px; height: 4px; border-radius: 2px; background: #999; }
.pre { font: bold 8px "Open Sans", sans-serif; text-anchor: middle; fill: #111; }
.cnt { font: 15px "Open Sans", sans-serif; text-anchor: middle; fill: #111; }
.hp { font: italic 10px "Open Sans", sans-serif; text-anchor: middle; fill: #fff; }
.hp2 { font-weight: 700; font-size: 13px; }
.q { font: bold 27px "Open Sans", sans-serif; text-anchor: middle; fill: #fff; }
.ltr { font: bold 12px "Open Sans", sans-serif; text-anchor: middle; fill: #fff; }
.tray {
  margin-left: auto;
  padding-bottom: 2px;
  display: grid;
  grid-template-columns: 40px 40px 40px 38px 60px 32px 28px 32px 93px 38px 15px;
}
.tray > div { display: grid; place-items: center; }
.tray .lang, .tray .clock { font-size: 15px; line-height: 20px; text-align: center; letter-spacing: -.1px; white-space: nowrap; }
.tray .clock { text-align: right; justify-content: end; }
```
